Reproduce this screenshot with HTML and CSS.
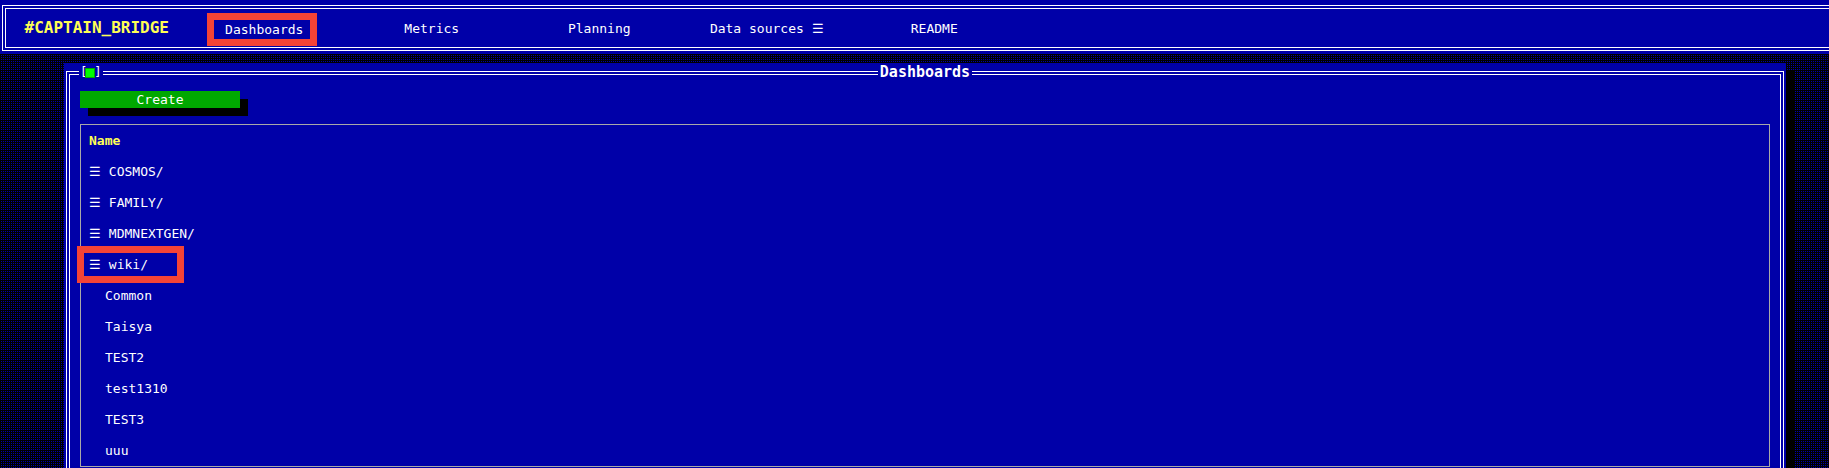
FILE: index.html
```html
<!DOCTYPE html>
<html lang="en">
<head>
<meta charset="utf-8">
<title>Captain Bridge — Dashboards</title>
<link rel="stylesheet" href="styles.css">
</head>
<body>
<header class="topbar">
  <nav class="topbar-frame">
    <div class="nav-cell"><span class="logo">#CAPTAIN_BRIDGE</span></div>
    <div class="nav-cell"><span class="nav-link nav-link--marked">Dashboards</span></div>
    <div class="nav-cell"><span class="nav-link">Metrics</span></div>
    <div class="nav-cell"><span class="nav-link">Planning</span></div>
    <div class="nav-cell"><span class="nav-link">Data sources ☰</span></div>
    <div class="nav-cell"><span class="nav-link">README</span></div>
  </nav>
</header>
<main class="desk">
  <section class="window">
    <span class="window-button">[<span class="window-button-box"></span>]</span>
    <fieldset class="window-frame">
      <legend class="window-title">Dashboards</legend>
      <div class="create-wrap"><button class="btn-create" type="button">Create</button></div>
      <div class="table">
        <div class="row row--head">Name</div>
        <div class="row">☰ COSMOS/</div>
        <div class="row">☰ FAMILY/</div>
        <div class="row">☰ MDMNEXTGEN/</div>
        <div class="row"><span class="mark">☰ wiki/</span></div>
        <div class="row row--child">Common</div>
        <div class="row row--child">Taisya</div>
        <div class="row row--child">TEST2</div>
        <div class="row row--child">test1310</div>
        <div class="row row--child">TEST3</div>
        <div class="row row--child">uuu</div>
      </div>
    </fieldset>
  </section>
</main>
</body>
</html>
```

FILE: styles.css
```css
* { box-sizing: border-box; }

html, body {
  margin: 0;
  height: 100%;
}

body {
  font-family: "DejaVu Sans Mono", "Liberation Mono", monospace;
  font-size: 13px;
  color: #ffffff;
  background-color: #0000a8;
  background-image:
    linear-gradient(90deg, #000000 50%, transparent 50%),
    linear-gradient(#000000 50%, transparent 50%);
  background-size: 2px 2px;
  overflow: hidden;
}

/* ---------- top bar ---------- */
.topbar {
  background: #0000a8;
  padding: 5px 0 3px 2px;
}

.topbar-frame {
  height: 46px;
  border: 4px double #ffffff;
  border-right: none;
  padding-left: 7px;
  display: grid;
  grid-template-columns: repeat(6, 167.5px);
  align-items: center;
}

.nav-cell {
  text-align: center;
  line-height: 38px;
  white-space: nowrap;
}

.logo {
  color: #ffff54;
  font-weight: bold;
  font-size: 16px;
}

.nav-link {
  color: #ffffff;
}

.nav-link--marked {
  display: inline-block;
  border: 7px solid #f44336;
  padding: 0 6.5px 0 11.5px;
  margin-left: -5px;
  line-height: 19px;
  height: 33px;
  vertical-align: middle;
}

/* ---------- desk ---------- */
.desk {
  padding: 9px 0 0 64px;
}

.window {
  position: relative;
  width: 1722px;
  height: 600px;
  background: #0000a8;
  padding: 2px;
  box-shadow: 8px 8px 0 #000000;
}

.window-button {
  position: absolute;
  left: 15px;
  top: 2px;
  padding: 0 2px 0 1px;
  background: #0000a8;
  font-size: 12px;
  line-height: 15px;
  color: #ffffff;
  z-index: 1;
}

.window-button-box {
  display: inline-block;
  width: 8px;
  height: 8px;
  margin-left: -1px;
  vertical-align: -1px;
  background: #00ff00;
  box-shadow: 0 0 0 1px #00a800;
}

.window-frame {
  margin: 0;
  min-width: 0;
  border: 4px double #ffffff;
  padding: 0 10px 10px;
}

.window-title {
  margin: 0 auto;
  padding: 0 2px;
  font-size: 15px;
  line-height: 15px;
  font-weight: bold;
  color: #ffffff;
}

.create-wrap {
  padding-top: 11px;
}

.btn-create {
  display: block;
  width: 160px;
  height: 17px;
  border: none;
  padding: 0;
  margin: 0;
  background: #00a800;
  color: #ffffff;
  font: inherit;
  line-height: 17px;
  text-align: center;
  box-shadow: 8px 8px 0 #000000;
}

.table {
  margin-top: 16px;
  border: 1px solid #a8a8a8;
}

.row {
  height: 31px;
  line-height: 31px;
  padding-left: 8px;
  display: flex;
  align-items: center;
  white-space: pre;
}

.row--head {
  color: #ffff54;
  font-weight: bold;
}

.row--child {
  padding-left: 24px;
}

.mark {
  display: inline-block;
  width: 107px;
  height: 37px;
  margin-left: -12px;
  padding-left: 5px;
  border: 7px solid #f44336;
  line-height: 23px;
  flex: none;
}
```
